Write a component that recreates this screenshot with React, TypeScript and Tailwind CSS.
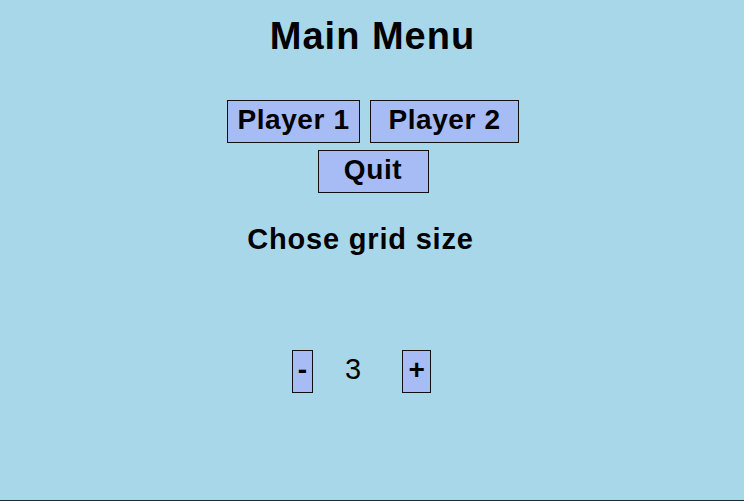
import React from "react";

const font = { fontFamily: '"Liberation Sans", Arial, sans-serif' };

export default function App() {
  return (
    <div
      className="w-[744px] h-[501px] box-border bg-[#a9d7ea] border-b border-[#1e2a2e] flex flex-col items-center text-black overflow-hidden"
      style={font}
    >
      <h1 className="mt-[17px] text-[38px] leading-none font-bold tracking-[1px] pl-[1px]">
        Main Menu
      </h1>
      <div className="mt-[45px] ml-[2px] flex gap-[10px]">
        <button className="w-[133px] h-[43px] box-border border border-[#111] bg-[#a7bcf4] text-[28px] leading-none font-bold tracking-[0.6px] pt-[5px] flex justify-center items-start">
          Player 1
        </button>
        <button className="w-[149px] h-[43px] box-border border border-[#111] bg-[#a7bcf4] text-[28px] leading-none font-bold tracking-[0.6px] pt-[5px] flex justify-center items-start">
          Player 2
        </button>
      </div>
      <button className="mt-[7px] ml-[2px] w-[111px] h-[43px] box-border border border-[#111] bg-[#a7bcf4] text-[28px] leading-none font-bold tracking-[0.6px] pt-[5px] flex justify-center items-start">
        Quit
      </button>
      <h2 className="mt-[32px] ml-[-23px] text-[29px] leading-none font-bold tracking-[0.8px]">
        Chose grid size
      </h2>
      <div className="mt-[96px] flex items-start ml-[-21px]">
        <button className="w-[21px] h-[43px] box-border border border-[#111] bg-[#a7bcf4] text-[28px] leading-none font-bold pt-[5px] flex justify-center items-start">
          -
        </button>
        <span className="ml-[32px] mt-[5px] text-[29px] leading-none font-normal">3</span>
        <button className="ml-[41px] w-[29px] h-[43px] box-border border border-[#111] bg-[#a7bcf4] text-[28px] leading-none font-bold pt-[5px] flex justify-center items-start">
          +
        </button>
      </div>
    </div>
  );
}
